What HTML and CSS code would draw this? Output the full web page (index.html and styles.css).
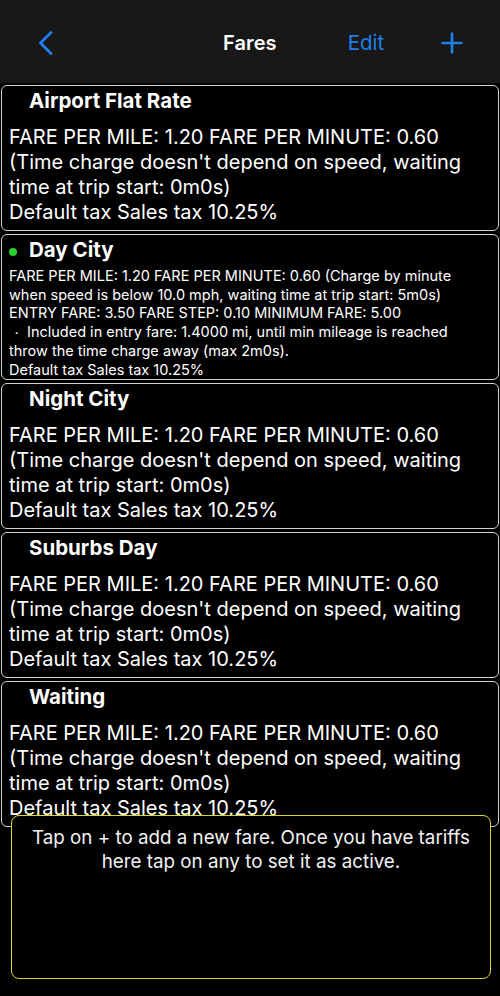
FILE: index.html
```html
<!DOCTYPE html>
<html lang="en">
<head>
<meta charset="utf-8">
<title>Fares</title>
<link rel="stylesheet" href="styles.css">
</head>
<body>
<header class="nav">
  <button class="nav-back" aria-label="Back">
    <svg width="16" height="24" viewBox="0 0 16 24"><path d="M13 1.5 L2.5 12 L13 22.5" fill="none" stroke="currentColor" stroke-width="2.8" stroke-linecap="round" stroke-linejoin="round"/></svg>
  </button>
  <h1 class="nav-title">Fares</h1>
  <button class="nav-edit">Edit</button>
  <button class="nav-add" aria-label="Add">
    <svg width="22" height="22" viewBox="0 0 22 22"><path d="M11 1.5 V20.5 M1.5 11 H20.5" fill="none" stroke="currentColor" stroke-width="2.7" stroke-linecap="round"/></svg>
  </button>
</header>

<main class="list">
  <section class="card">
    <h2 class="card-title">Airport Flat Rate</h2>
    <p class="card-body">FARE PER MILE: 1.20 FARE PER MINUTE: 0.60<br>(Time charge doesn't depend on speed, waiting<br>time at trip start: 0m0s)<br>Default tax Sales tax 10.25%</p>
  </section>
  <section class="card card-active">
    <h2 class="card-title"><span class="dot"></span>Day City</h2>
    <p class="card-body small">FARE PER MILE: 1.20 FARE PER MINUTE: 0.60 (Charge by minute<br>when speed is below 10.0 mph, waiting time at trip start: 5m0s)<br>ENTRY FARE: 3.50 FARE STEP: 0.10 MINIMUM FARE: 5.00<br><span class="bullet">・</span>Included in entry fare: 1.4000 mi, until min mileage is reached<br>throw the time charge away (max 2m0s).<br>Default tax Sales tax 10.25%</p>
  </section>
  <section class="card">
    <h2 class="card-title">Night City</h2>
    <p class="card-body">FARE PER MILE: 1.20 FARE PER MINUTE: 0.60<br>(Time charge doesn't depend on speed, waiting<br>time at trip start: 0m0s)<br>Default tax Sales tax 10.25%</p>
  </section>
  <section class="card">
    <h2 class="card-title">Suburbs Day</h2>
    <p class="card-body">FARE PER MILE: 1.20 FARE PER MINUTE: 0.60<br>(Time charge doesn't depend on speed, waiting<br>time at trip start: 0m0s)<br>Default tax Sales tax 10.25%</p>
  </section>
  <section class="card">
    <h2 class="card-title">Waiting</h2>
    <p class="card-body">FARE PER MILE: 1.20 FARE PER MINUTE: 0.60<br>(Time charge doesn't depend on speed, waiting<br>time at trip start: 0m0s)<br>Default tax Sales tax 10.25%</p>
  </section>
</main>

<aside class="hint">
  <p>Tap on + to add a new fare. Once you have tariffs<br>here tap on any to set it as active.</p>
</aside>
</body>
</html>
```

FILE: styles.css
```css
* { box-sizing: border-box; }

html, body {
  margin: 0;
  padding: 0;
  background: #000;
  color: #fff;
  font-family: Inter, "Noto Sans", sans-serif;
}

body {
  width: 500px;
  height: 996px;
  overflow: hidden;
  position: relative;
}

button {
  background: none;
  border: 0;
  padding: 0;
  font: inherit;
  color: inherit;
}

.nav {
  height: 83px;
  background: #181818;
  display: flex;
  align-items: center;
  padding: 2px 0 0 38px;
}

.nav-back {
  color: #1f7fe6;
  display: flex;
  width: 16px;
  height: 24px;
}

.nav-title {
  margin: 0 0 0 169px;
  font-size: 20px;
  font-weight: 600;
  letter-spacing: 0.1px;
}

.nav-edit {
  margin-left: 71px;
  color: #1f7fe6;
  font-size: 20.5px;
  font-weight: 400;
}

.nav-add {
  margin-left: 57px;
  color: #1f7fe6;
  display: flex;
  width: 22px;
  height: 22px;
}

.list {
  display: flex;
  flex-direction: column;
  gap: 3px;
  padding: 2px 1px 0;
}

.card {
  height: 146px;
  border: 1px solid #d0d0d0;
  border-radius: 6px;
  background: #000;
  padding: 3px 7px 0;
  overflow: hidden;
}

.card-title {
  margin: 0 0 12px;
  font-size: 20.5px;
  font-weight: 700;
  line-height: 24px;
  padding-left: 20px;
  position: relative;
}

.card-active .card-title {
  margin-bottom: 5px;
  padding-top: 0;
}

.dot {
  position: absolute;
  left: 0;
  top: 10px;
  width: 8px;
  height: 8px;
  border-radius: 50%;
  background: #2bcf2b;
}

.card-body {
  margin: 0;
  font-size: 20px;
  line-height: 25px;
  white-space: nowrap;
}

.card-body.small {
  font-size: 14.5px;
  line-height: 18.5px;
}

.bullet {
  display: inline-block;
  width: 18px;
  text-align: left;
  padding-left: 2px;
  font-size: 11px;
}

.hint {
  position: absolute;
  left: 11px;
  top: 815px;
  width: 480px;
  height: 164px;
  border: 1.5px solid #d8d82a;
  border-radius: 8px;
  background: #000;
  padding-top: 10px;
}

.hint p {
  margin: 0;
  text-align: center;
  font-size: 18.8px;
  line-height: 24px;
  color: #f2f2f2;
}
```
